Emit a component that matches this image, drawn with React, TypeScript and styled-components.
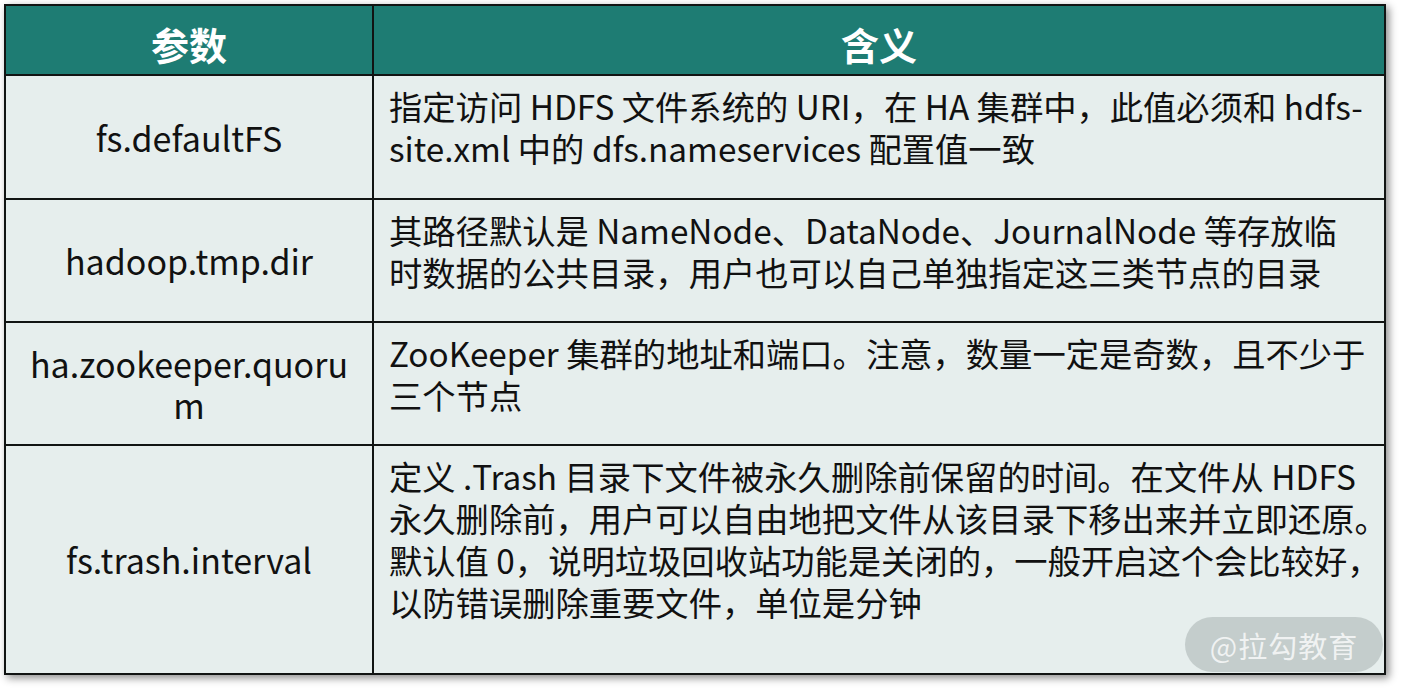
import React from "react";
import styled, { createGlobalStyle } from "styled-components";

const Global = createGlobalStyle`
  html, body { margin: 0; padding: 0; background: #ffffff; }
  body { font-family: "Noto Sans CJK SC", "Noto Sans", sans-serif; }
`;

const Page = styled.div`
  padding: 4px 0 0 4px;
  width: 1401px;
  height: 691px;
  box-sizing: border-box;
`;

const Frame = styled.div`
  position: relative;
  width: 1382px;
  box-sizing: border-box;
  display: grid;
  grid-template-columns: 366px 1010px;
  grid-template-rows: 68px 122px 121px 121px 227px;
  gap: 2px;
  padding: 2px;
  background: #111413;
  box-shadow: 3px 3px 8px rgba(0, 0, 0, 0.45);
`;

const HeadCell = styled.div`
  background: #1e7c73;
  color: #ffffff;
  font-weight: 700;
  font-size: 38px;
  display: flex;
  align-items: center;
  justify-content: center;
  padding-top: 6px;
  box-sizing: border-box;
`;

const KeyCell = styled.div`
  background: #e6eeed;
  color: #111;
  font-size: 34px;
  line-height: 41px;
  display: flex;
  flex-direction: column;
  align-items: center;
  justify-content: center;
  text-align: center;
  padding: 0 14px;
  box-sizing: border-box;
`;

const DescCell = styled.div`
  background: #e6eeed;
  color: #111;
  font-size: 33.3px;
  line-height: 42px;
  padding: 9px 0 0 15px;
  box-sizing: border-box;
`;

const Line = styled.span`
  display: block;
  white-space: nowrap;
`;

const Watermark = styled.div`
  position: absolute;
  right: 3px;
  bottom: 3px;
  width: 198px;
  height: 55px;
  border-radius: 28px;
  background: rgba(150, 160, 160, 0.42);
  color: rgba(255, 255, 255, 0.75);
  font-size: 29px;
  display: flex;
  align-items: center;
  justify-content: center;
  letter-spacing: 1px;
`;

const rows = [
  {
    key: ["fs.defaultFS"],
    desc: [
      "指定访问 HDFS 文件系统的 URI，在 HA 集群中，此值必须和 hdfs-",
      "site.xml 中的 dfs.nameservices 配置值一致",
    ],
  },
  {
    key: ["hadoop.tmp.dir"],
    desc: [
      "其路径默认是 NameNode、DataNode、JournalNode 等存放临",
      "时数据的公共目录，用户也可以自己单独指定这三类节点的目录",
    ],
  },
  {
    key: ["ha.zookeeper.quoru", "m"],
    desc: [
      "ZooKeeper 集群的地址和端口。注意，数量一定是奇数，且不少于",
      "三个节点",
    ],
  },
  {
    key: ["fs.trash.interval"],
    desc: [
      "定义 .Trash 目录下文件被永久删除前保留的时间。在文件从 HDFS",
      "永久删除前，用户可以自由地把文件从该目录下移出来并立即还原。",
      "默认值 0，说明垃圾回收站功能是关闭的，一般开启这个会比较好，",
      "以防错误删除重要文件，单位是分钟",
    ],
  },
];

export default function App() {
  return (
    <>
      <Global />
      <Page>
        <Frame>
          <HeadCell>参数</HeadCell>
          <HeadCell>含义</HeadCell>
          {rows.map((r) => (
            <React.Fragment key={r.key.join("")}>
              <KeyCell>
                {r.key.map((k) => (
                  <Line key={k}>{k}</Line>
                ))}
              </KeyCell>
              <DescCell>
                {r.desc.map((d) => (
                  <Line key={d}>{d}</Line>
                ))}
              </DescCell>
            </React.Fragment>
          ))}
          <Watermark>@拉勾教育</Watermark>
        </Frame>
      </Page>
    </>
  );
}
